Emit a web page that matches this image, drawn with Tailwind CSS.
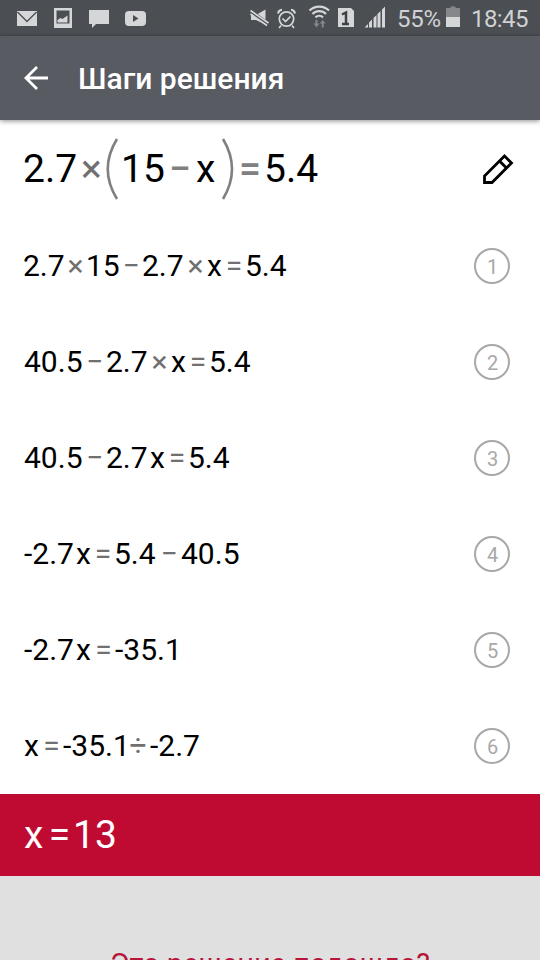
<!DOCTYPE html>
<html lang="ru">
    <head>
        <meta charset="utf-8" />
        <title>Шаги решения</title>
        <script src="https://cdn.jsdelivr.net/npm/@tailwindcss/browser@4"></script>
    </head>
    <body class="w-[540px] h-[960px] overflow-hidden bg-white font-[Roboto,sans-serif] flex flex-col">
        <!-- status bar -->
        <div class="h-9 shrink-0 bg-[#4b4e53] flex items-center text-[#d0d1d3]">
            <svg class="w-[240px] h-9 shrink-0" viewBox="0 0 240 36">
                <path fill="#d5d6d8" d="M17 11h20v15H17z" />
                <path fill="none" stroke="#4b4e53" stroke-width="1.3" d="M17.5 12l9.5 9.5 9.500-9.500" />
                <path fill="#d5d6d8" fill-rule="evenodd" d="M54 8h18v20H54zM56.500 10.500v13h13v-13z" />
                <path fill="#d5d6d8" d="M57.500 22.500v-2.500l3-2 2 1 5-3.500v7z" />
                <path fill="#d5d6d8" d="M89 10h20v14H96l-4 4v-4h-3z" />
                <rect fill="#d5d6d8" x="125" y="11" width="21" height="15" rx="4" />
                <path fill="#4b4e53" d="M133 15v7l5.500-3.500z" />
            </svg>
            <svg class="w-[150px] h-9 shrink-0" viewBox="240 0 150 36">
                <path fill="#d5d6d8" d="M251 15h5l9.500-5.500v15L256 20h-5z" />
                <path stroke="#4b4e53" stroke-width="4.500" d="M250.500 11.500l18 13" />
                <path stroke="#d5d6d8" stroke-width="1.700" d="M250.500 10.500l18 12.500M250.500 14l16.500 11.500" />
                <g fill="none" stroke="#d5d6d8" stroke-width="1.700">
                    <circle cx="286.500" cy="19" r="7.200" />
                    <path d="M282.500 18.500l3 3 5-5M281 25.500l-2 2.500M292 25.500l2 2.500" />
                    <path stroke-width="2" d="M278 13.500a4.500 4.500 0 0 1 4-3.700M295 13.500a4.500 4.500 0 0 0-4-3.700" />
                </g>
                <g fill="none" stroke="#d5d6d8" stroke-width="2.200">
                    <path d="M309.500 10.500a14 14 0 0 1 19.500 0M312.500 14a9.500 9.500 0 0 1 13.500 0M315.500 17.400a5.500 5.500 0 0 1 7.500 0" />
                </g>
                <path fill="#85878b" d="M315.500 20h2v3.500h2l-3 4-3-4h2zM321.700 27.500h2v-4h2l-3-3.500-3 3.500h2z" />
                <path fill="#d5d6d8" d="M338 8h13l3 3v16h-16z" />
                <path fill="none" stroke="#3d4045" stroke-width="2.500" d="M342 14.500l4-2V24M342 24h7" />
                <path fill="#d5d6d8" d="M364.500 27.500l3.500-3.500v3.500zM369 27.500v-5l3-3v8zM373.500 27.500v-9.500l3-3v12.500zM377.500 27.500V14l3-3v16.500zM382 27.500V9.500l3-3v21z" />
            </svg>
            <span class="w-14 text-2xl tracking-[-0.3px] pl-[7px] pt-[2px]">55%</span>
            <svg class="w-[14px] h-9 shrink-0" viewBox="446 0 14 36">
                <path fill="#85878b" d="M450.500 6.500h5V8h4.500v9h-14V8h4.500z" />
                <path fill="#d5d6d8" d="M446 17h14v10h-14z" />
            </svg>
            <span class="text-2xl tracking-[-0.6px] pl-[11px] pt-[2px]">18:45</span>
        </div>

        <!-- app bar -->
        <div class="h-[84px] shrink-0 bg-[#585b61] flex items-center pl-6 shadow-[0_1px_5px_rgba(0,0,0,0.45)]">
            <svg class="w-[25px] h-6" viewBox="0 0 25 24" fill="none" stroke="#fff" stroke-width="2.800">
                <path d="M24 12H2.500M13 1L2 12l11 11" />
            </svg>
            <h1 class="ml-[29px] text-[30px] font-medium text-white">Шаги решения</h1>
        </div>

        <!-- source equation -->
        <div class="h-[98px] shrink-0 flex items-center justify-between pl-[23px] pr-[26px]">
            <div class="flex items-center text-[39px] leading-none text-black whitespace-nowrap">
                <span class="w-[56px]">2.7</span>
                <span class="w-[25px] text-center text-[#707070]">×</span>
                <svg class="w-[17px] h-[62px]" viewBox="0 0 17 62" fill="none" stroke="#808080" stroke-width="2.600"><path d="M13 1Q-5.500 31 13 61" /></svg>
                <span class="w-[45px]">15</span>
                <span class="w-[28px] text-center font-medium text-[#808080]">−</span>
                <span class="w-[26px] pl-[2px]">x</span>
                <svg class="w-[16px] h-[62px]" viewBox="0 0 16 62" fill="none" stroke="#808080" stroke-width="2.600"><path d="M3 1Q21 31 3 61" /></svg>
                <span class="w-[28px] text-center font-medium text-[#808080]">=</span>
                <span>5.4</span>
            </div>
            <svg class="w-8 h-8" viewBox="0 0 32 32" fill="none" stroke="#000" stroke-width="2.800">
                <path d="M2.500 29.500v-6.500L22.500 3l7 7L10 29.500zM17.500 8l7 7" />
            </svg>
        </div>

        <!-- steps -->
        <ol class="shrink-0 text-[30px] leading-none text-black whitespace-nowrap">
            <li class="h-24 flex items-center justify-between pl-[23px] pr-[30px]">
                <div class="flex">
                    <span class="w-[42px]">2.7</span>
                    <span class="w-[21px] text-center text-[#707070]">×</span>
                    <span class="w-[34px]">15</span>
                    <span class="w-[22px] text-center text-[#707070]">−</span>
                    <span class="w-[42px]">2.7</span>
                    <span class="w-[23px] text-center text-[#707070]">×</span>
                    <span class="w-[16px]">x</span>
                    <span class="w-[22px] text-center text-[#707070]">=</span>
                    <span>5.4</span>
                </div>
                <span class="size-9 rounded-full border-2 border-[#a8a8a8] text-[#a8a8a8] text-xl flex items-center justify-center pt-[2px] pl-px">1</span>
            </li>
            <li class="h-24 flex items-center justify-between pl-6 pr-[30px]">
                <div class="flex">
                    <span class="w-[59px]">40.5</span>
                    <span class="w-[23px] text-center text-[#707070]">−</span>
                    <span class="w-[42px]">2.7</span>
                    <span class="w-[23px] text-center text-[#707070]">×</span>
                    <span class="w-[16px]">x</span>
                    <span class="w-[22px] text-center text-[#707070]">=</span>
                    <span>5.4</span>
                </div>
                <span class="size-9 rounded-full border-2 border-[#a8a8a8] text-[#a8a8a8] text-xl flex items-center justify-center pt-[2px] pl-px">2</span>
            </li>
            <li class="h-24 flex items-center justify-between pl-6 pr-[30px]">
                <div class="flex">
                    <span class="w-[59px]">40.5</span>
                    <span class="w-[23px] text-center text-[#707070]">−</span>
                    <span class="w-[44px]">2.7</span>
                    <span class="w-[16px]">x</span>
                    <span class="w-[22px] text-center text-[#707070]">=</span>
                    <span>5.4</span>
                </div>
                <span class="size-9 rounded-full border-2 border-[#a8a8a8] text-[#a8a8a8] text-xl flex items-center justify-center pt-[2px] pl-px">3</span>
            </li>
            <li class="h-24 flex items-center justify-between pl-6 pr-[30px]">
                <div class="flex">
                    <span class="w-[52px]">-2.7</span>
                    <span class="w-[16px]">x</span>
                    <span class="w-[22px] text-center text-[#707070]">=</span>
                    <span class="w-[43px]">5.4</span>
                    <span class="w-[24px] text-center text-[#707070]">−</span>
                    <span>40.5</span>
                </div>
                <span class="size-9 rounded-full border-2 border-[#a8a8a8] text-[#a8a8a8] text-xl flex items-center justify-center pt-[2px] pl-px">4</span>
            </li>
            <li class="h-24 flex items-center justify-between pl-6 pr-[30px]">
                <div class="flex">
                    <span class="w-[52px]">-2.7</span>
                    <span class="w-[16px]">x</span>
                    <span class="w-[23px] text-center text-[#707070]">=</span>
                    <span>-35.1</span>
                </div>
                <span class="size-9 rounded-full border-2 border-[#a8a8a8] text-[#a8a8a8] text-xl flex items-center justify-center pt-[2px] pl-px">5</span>
            </li>
            <li class="h-24 flex items-center justify-between pl-6 pr-[30px]">
                <div class="flex">
                    <span class="w-[16px]">x</span>
                    <span class="w-[23px] text-center text-[#707070]">=</span>
                    <span class="w-[66px]">-35.1</span>
                    <span class="w-[18px] text-center text-[#707070]">÷</span>
                    <span class="pl-[3px]">-2.7</span>
                </div>
                <span class="size-9 rounded-full border-2 border-[#a8a8a8] text-[#a8a8a8] text-xl flex items-center justify-center pt-[2px] pl-px">6</span>
            </li>
        </ol>

        <!-- result -->
        <div class="h-[82px] shrink-0 bg-[#bf0a31] text-white text-[39px] leading-none flex items-center pl-6">
            <span class="w-[22px]">x</span>
            <span class="w-[27px] text-center">=</span>
            <span>13</span>
        </div>

        <div class="h-[84px] shrink-0 bg-[#e0e0e0] pt-[74px] text-center text-[#b5163a] text-[29px] leading-none whitespace-nowrap overflow-hidden">Это решение подошло?</div>
    </body>
</html>
